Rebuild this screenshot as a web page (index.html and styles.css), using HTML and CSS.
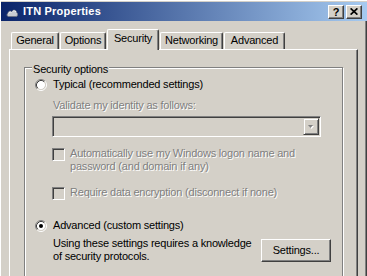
FILE: index.html
```html
<!DOCTYPE html>
<html>
<head>
<meta charset="utf-8">
<link rel="stylesheet" href="styles.css">
</head>
<body>
<div class="window">
  <div class="titlebar">
    <svg class="appicon" viewBox="0 0 12 9" width="12" height="9">
      <path d="M2.5 8.5C0.8 8.5 0.3 6 2 5.4C2 3.2 4.6 2.4 5.8 4C6.5 1.3 10.5 1.6 10.6 4.6C12.2 4.9 12 8.5 10.2 8.5Z" fill="#c9ccd2" stroke="#6f7480" stroke-width="0.8"/>
      <path d="M2.6 5.6C2.8 4 4.6 3.4 5.6 4.6M6.4 3.6C7.2 2.3 9.6 2.4 10 4.2" fill="none" stroke="#fff" stroke-width="0.8"/>
    </svg>
    <span class="title">ITN Properties</span>
    <div class="capbtns">
      <span class="capbtn help">?</span>
      <span class="capbtn"><svg viewBox="0 0 8 7" width="8" height="7"><path d="M0.6 0.4L7.4 6.6M7.4 0.4L0.6 6.6" stroke="#000" stroke-width="1.7"/></svg></span>
    </div>
  </div>
  <div class="body">
    <div class="tabs">
      <div class="tab t-general">General</div>
      <div class="tab t-options">Options</div>
      <div class="tab t-security active">Security</div>
      <div class="tab t-networking">Networking</div>
      <div class="tab t-advanced">Advanced</div>
    </div>
    <div class="panel">
      <div class="group">
        <span class="legend">Security options</span>
        <div class="opt">
          <svg class="radio" viewBox="0 0 12 12" width="12" height="12">
            <circle cx="6" cy="6" r="4.2" fill="#fff"/>
            <path d="M2.11 9.89A5.5 5.5 0 0 1 9.89 2.11" stroke="#808080" fill="none"/>
            <path d="M9.89 2.11A5.5 5.5 0 0 1 2.11 9.89" stroke="#fff" fill="none"/>
            <path d="M2.82 9.18A4.5 4.5 0 0 1 9.18 2.82" stroke="#404040" fill="none"/>
            <path d="M9.18 2.82A4.5 4.5 0 0 1 2.82 9.18" stroke="#d4d0c8" fill="none"/>
          </svg>
          <span>Typical (recommended settings)</span>
        </div>
        <div class="indent">
          <div class="validate disabled">Validate my identity as follows:</div>
          <div class="combo">
            <div class="ddbtn">
              <svg viewBox="0 0 8 5" width="8" height="5"><path d="M2 2h5l-2.5 3z" fill="#fff"/><path d="M1 1h5l-2.5 3z" fill="#808080"/></svg>
            </div>
          </div>
          <div class="check check1">
            <span class="cbox"></span>
            <span class="disabled">Automatically use my Windows logon name and<br>password (and domain if any)</span>
          </div>
          <div class="check check2">
            <span class="cbox"></span>
            <span class="disabled">Require data encryption (disconnect if none)</span>
          </div>
        </div>
        <div class="opt adv">
          <svg class="radio" viewBox="0 0 12 12" width="12" height="12">
            <circle cx="6" cy="6" r="4.2" fill="#fff"/>
            <path d="M2.11 9.89A5.5 5.5 0 0 1 9.89 2.11" stroke="#808080" fill="none"/>
            <path d="M9.89 2.11A5.5 5.5 0 0 1 2.11 9.89" stroke="#fff" fill="none"/>
            <path d="M2.82 9.18A4.5 4.5 0 0 1 9.18 2.82" stroke="#404040" fill="none"/>
            <path d="M9.18 2.82A4.5 4.5 0 0 1 2.82 9.18" stroke="#d4d0c8" fill="none"/>
            <circle cx="6" cy="6" r="2" fill="#000"/>
          </svg>
          <span>Advanced (custom settings)</span>
        </div>
        <div class="info">
          <span>Using these settings requires a knowledge<br>of security protocols.</span>
          <span class="btn">Settings...</span>
        </div>
      </div>
    </div>
  </div>
</div>
</body>
</html>
```
FILE: styles.css
```css
* { box-sizing: border-box; }
html, body { margin: 0; padding: 0; }
body {
  width: 367px; height: 276px; overflow: hidden;
  background: #d4d0c8;
  font-family: "Liberation Sans", Arial, sans-serif;
  font-size: 11px; line-height: 13px; color: #000;
  letter-spacing: -0.2px;
}
.window {
  width: 367px; height: 276px; overflow: hidden;
  border-left: 1px solid #fff; border-top: 1px solid #fff;
  padding-top: 1px; background: #d4d0c8;
}
.titlebar {
  height: 19px; display: flex; align-items: center;
  background: linear-gradient(to right, #0a246a, #a6caf0);
  color: #fff;
}
.appicon { margin: 1px 5px 0 5px; flex: none; }
.title { font-weight: bold; flex: 1; letter-spacing: 0.2px; }
.capbtns { display: flex; gap: 2px; margin-right: 5px; }
.capbtn {
  width: 16px; height: 14px; background: #d4d0c8;
  border: 1px solid; border-color: #fff #404040 #404040 #fff;
  box-shadow: inset -1px -1px 0 #808080;
  display: flex; align-items: center; justify-content: center;
  color: #000;
}
.help { font-weight: bold; font-size: 11px; line-height: 11px; padding-top: 1px; letter-spacing: 0; }
.body {
  height: 255px; padding: 8px 0 0 8px;
  border-right: 1px solid #404040;
  box-shadow: inset -1px 0 0 #808080;
}
.tabs {
  display: flex; align-items: flex-end; padding-left: 2px;
  position: relative; z-index: 1;
}
.tab {
  height: 17px; margin-right: 1px; padding-top: 1px;
  border-top: 1px solid #fff; border-left: 1px solid #fff;
  border-right: 1px solid #404040;
  border-radius: 2px 2px 0 0;
  box-shadow: inset -1px 0 0 #808080;
  background: #d4d0c8; text-align: center; white-space: nowrap;
}
.tab.active { height: 21px; margin-bottom: -1px; padding-top: 2px; }
.t-general { width: 48px; }
.t-options { width: 46px; }
.t-security { width: 52px; }
.t-networking { width: 63px; }
.t-advanced { width: 61px; }
.panel {
  width: 349px; height: 240px;
  border-top: 1px solid #fff; border-left: 1px solid #fff;
  border-right: 1px solid #404040;
  box-shadow: inset -1px 0 0 #808080;
  padding: 17px 0 0 14px;
}
.group {
  position: relative; width: 319px; height: 230px;
  border: 1px solid #808080;
  box-shadow: inset 1px 1px 0 #fff, 1px 1px 0 #fff;
  padding: 10px 11px 0 10px;
}
.legend {
  position: absolute; left: 7px; top: -5px;
  padding: 0 1px; background: #d4d0c8;
}
.opt { display: flex; align-items: center; gap: 6px; height: 13px; }
.radio { flex: none; }
.indent { margin-left: 17px; }
.disabled { color: #808080; text-shadow: 1px 1px 0 #fff; }
.validate { margin-top: 8px; padding-left: 1px; }
.combo {
  margin-top: 4px; width: 269px; height: 21px;
  border: 1px solid; border-color: #808080 #fff #fff #808080;
  box-shadow: inset 1px 1px 0 #404040, inset -1px -1px 0 #d4d0c8;
  padding: 1px; display: flex; justify-content: flex-end;
}
.ddbtn {
  width: 16px; height: 17px;
  border: 1px solid; border-color: #d4d0c8 #404040 #404040 #d4d0c8;
  box-shadow: inset 1px 1px 0 #fff, inset -1px -1px 0 #808080;
  display: flex; align-items: center; justify-content: center;
}
.check { display: flex; align-items: flex-start; gap: 5px; }
.check1 { margin-top: 10px; }
.check2 { margin-top: 13px; }
.cbox {
  flex: none; width: 13px; height: 13px; margin-top: 1px;
  border: 1px solid; border-color: #808080 #fff #fff #808080;
  box-shadow: inset 1px 1px 0 #404040, inset -1px -1px 0 #d4d0c8;
  background: #d4d0c8;
}
.adv { margin-top: 19px; }
.info {
  margin: 5px 0 0 18px;
  display: flex; justify-content: space-between; align-items: flex-start;
}
.btn {
  flex: none; width: 70px; height: 23px; margin-top: 2px;
  border: 1px solid; border-color: #fff #404040 #404040 #fff;
  box-shadow: inset -1px -1px 0 #808080;
  background: #d4d0c8;
  display: flex; align-items: center; justify-content: center;
}
```
